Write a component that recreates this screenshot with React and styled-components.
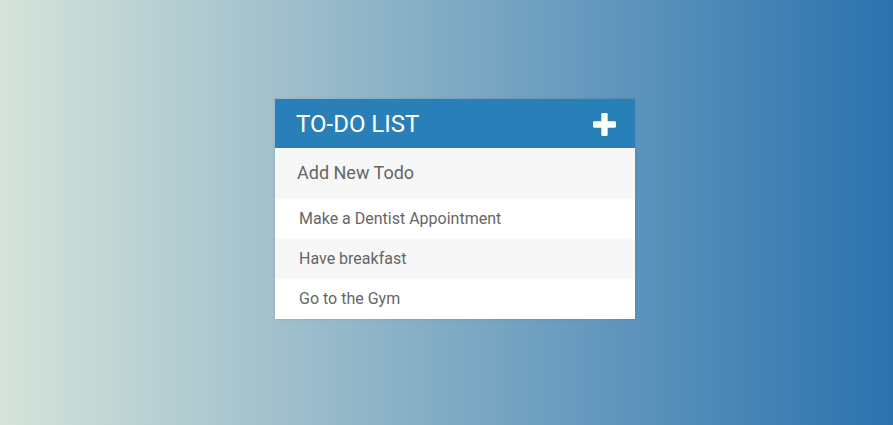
import React from 'react';
import styled, { createGlobalStyle } from 'styled-components';

const GlobalStyle = createGlobalStyle`
  html, body {
    margin: 0;
    padding: 0;
    height: 100%;
  }
  body {
    font-family: Roboto, "Liberation Sans", sans-serif;
    background: linear-gradient(to right, #d6e4da, #2b72af);
  }
  #root {
    min-height: 100%;
  }
`;

const Page = styled.div`
  min-height: 425px;
  padding: 99px 0 0 275px;
  box-sizing: border-box;
`;

const Container = styled.div`
  width: 360px;
  background: #f7f7f7;
  box-shadow: 0 0 3px rgba(0, 0, 0, 0.12);
`;

const Title = styled.h1`
  display: flex;
  justify-content: space-between;
  align-items: center;
  margin: 0;
  height: 49px;
  padding: 0 19px 0 21px;
  background: #2980b9;
  color: #fff;
  font-size: 24px;
  font-weight: 400;
  text-transform: uppercase;
  box-sizing: border-box;
`;

const PlusIcon = styled.svg`
  width: 23px;
  height: 23px;
  margin-top: 1px;
  cursor: pointer;
`;

const TodoInput = styled.input`
  display: block;
  width: 100%;
  height: 51px;
  box-sizing: border-box;
  padding: 0 20px 2px 22px;
  border: none;
  outline: none;
  background: #f7f7f7;
  color: #666;
  font-family: Roboto, "Liberation Sans", sans-serif;
  font-size: 18px;

  &::placeholder {
    color: #666;
  }
`;

const List = styled.ul`
  list-style: none;
  margin: 0;
  padding: 0;
`;

const Item = styled.li`
  height: 40px;
  line-height: 40px;
  padding-left: 24px;
  color: #666;
  font-size: 16px;
  background: ${props => (props.striped ? '#f7f7f7' : '#fff')};
`;

const todos = ['Make a Dentist Appointment', 'Have breakfast', 'Go to the Gym'];

export default function App() {
  return (
    <>
      <GlobalStyle />
      <Page>
        <Container>
          <Title>
            To-Do List
            <PlusIcon viewBox="0 0 24 24">
              <rect x="8.7" y="0" width="6.6" height="24" rx="1.4" fill="#fff" />
              <rect x="0" y="8.7" width="24" height="6.6" rx="1.4" fill="#fff" />
            </PlusIcon>
          </Title>
          <TodoInput type="text" placeholder="Add New Todo" />
          <List>
            {todos.map((todo, i) => (
              <Item key={todo} striped={i % 2 === 1}>
                {todo}
              </Item>
            ))}
          </List>
        </Container>
      </Page>
    </>
  );
}
